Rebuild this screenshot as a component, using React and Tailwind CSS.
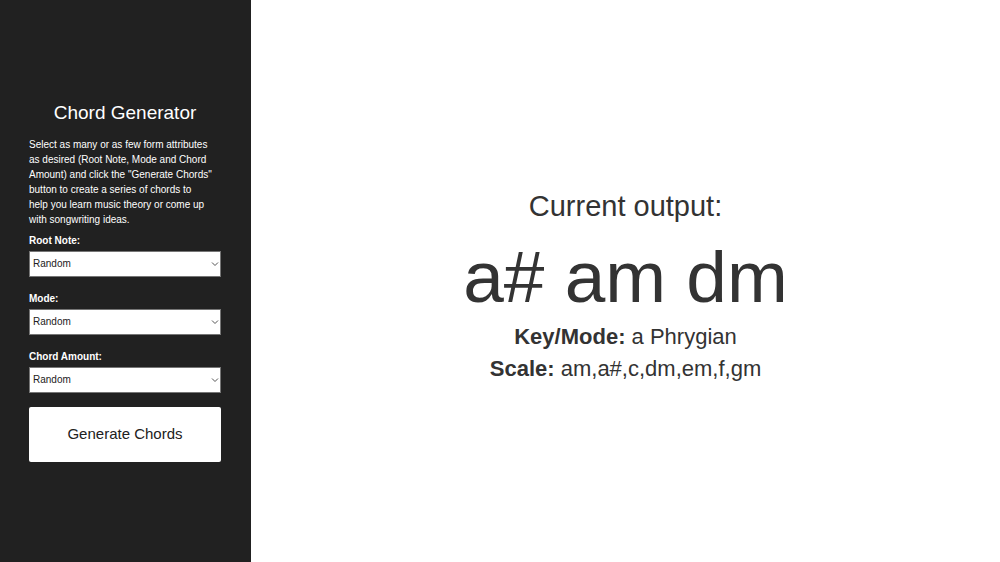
const roots = ["Random", "a", "a#", "b", "c", "c#", "d", "d#", "e", "f", "f#", "g", "g#"];
const modes = ["Random", "Ionian", "Dorian", "Phrygian", "Lydian", "Mixolydian", "Aeolian", "Locrian"];
const amounts = ["Random", "2", "3", "4", "5", "6", "7", "8"];

function SelectField({ id, label, options }) {
  return (
    <div>
      <label htmlFor={id} className="block text-[10px] leading-[15px] font-bold">
        {label}
      </label>
      <div className="relative mt-[3px]">
        <select
          id={id}
          className="block h-[26px] w-full appearance-none border border-[#767676] bg-white pl-[3px] pr-4 text-[10px] leading-4 text-[#212121]"
        >
          {options.map((o) => (
            <option key={o}>{o}</option>
          ))}
        </select>
        <svg
          className="pointer-events-none absolute inset-y-0 right-[2px] my-auto h-2 w-2"
          viewBox="0 0 8 8"
          fill="none"
          stroke="#555"
          strokeWidth="1"
          aria-hidden="true"
        >
          <path d="M1 2.5 4 5.5 7 2.5" />
        </svg>
      </div>
    </div>
  );
}

export default function App() {
  return (
    <div className="flex min-h-screen font-['Liberation_Sans',Arial,sans-serif]">
      <aside className="box-content flex w-[19.2%] flex-col justify-center bg-[#212121] pr-[30px] pl-[29px] text-white">
        <h1 className="text-center text-[19px] leading-6">Chord Generator</h1>
        <p className="mt-3 pr-1 text-[10px] leading-[15px]">
          Select as many or as few form attributes as desired (Root Note, Mode and Chord Amount) and
          click the "Generate Chords" button to create a series of chords to help&nbsp;you learn
          music theory or come up with songwriting ideas.
        </p>
        <form className="mt-[6px] flex flex-col gap-[14px]" onSubmit={(e) => e.preventDefault()}>
          <SelectField id="root" label="Root Note:" options={roots} />
          <SelectField id="mode" label="Mode:" options={modes} />
          <SelectField id="amount" label="Chord Amount:" options={amounts} />
          <button type="submit" className="h-[55px] rounded-[2px] bg-white text-[15px] text-[#212121]">
            Generate Chords
          </button>
        </form>
      </aside>
      <main className="flex flex-1 flex-col items-center justify-center pt-[10px] text-center text-[#333]">
        <h2 className="text-[29px] leading-[34px]">Current output:</h2>
        <p className="mt-3 text-[73px] leading-[84px]">a# am dm</p>
        <p className="mt-1 text-[22px] leading-7">
          <strong>Key/Mode:</strong> a Phrygian
        </p>
        <p className="mt-1 text-[22px] leading-7">
          <strong>Scale:</strong> am,a#,c,dm,em,f,gm
        </p>
      </main>
    </div>
  );
}
